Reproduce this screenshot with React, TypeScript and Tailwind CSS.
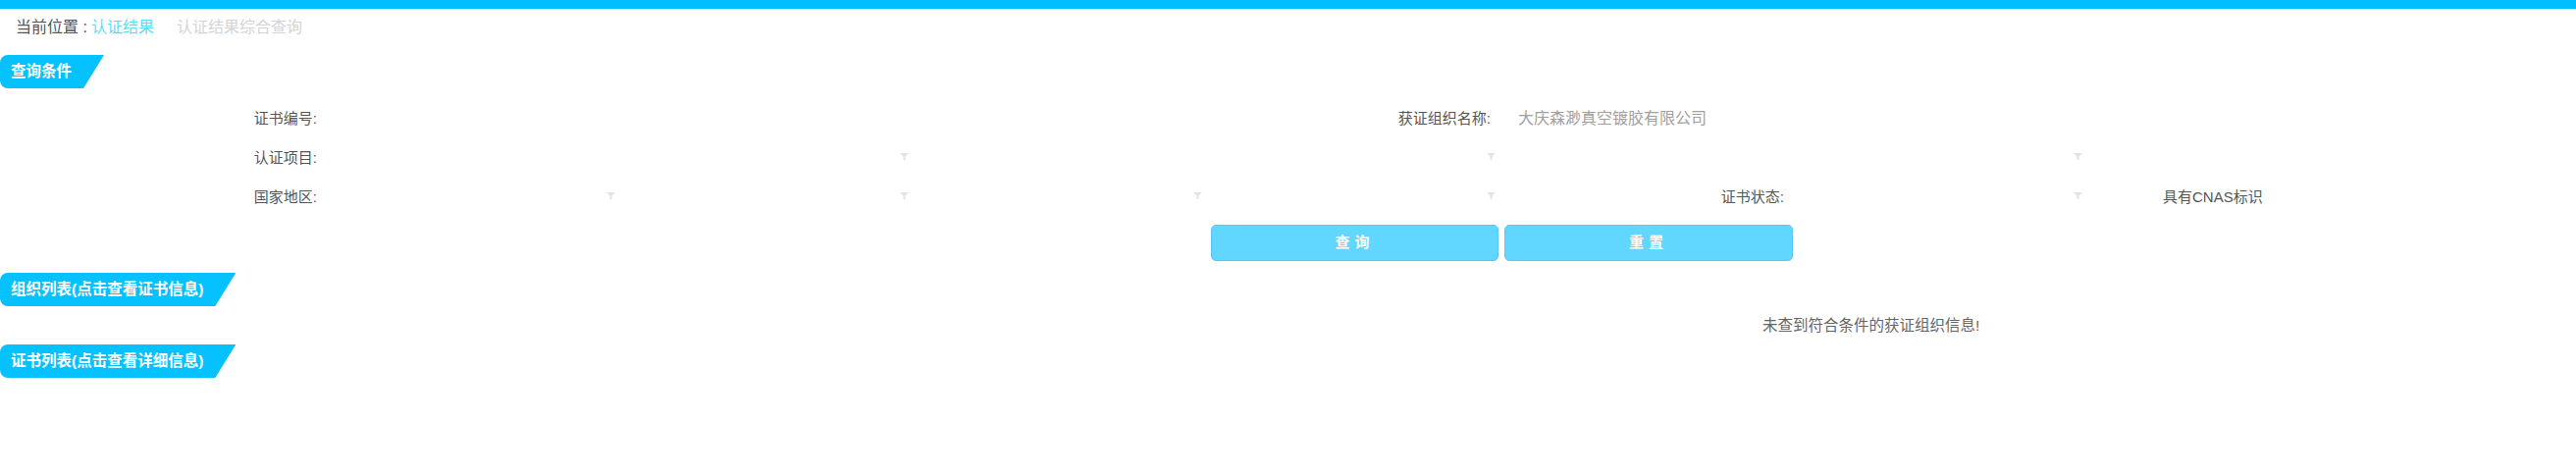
import React from "react";

const font = "font-['Liberation_Sans','Noto_Sans_CJK_SC',sans-serif]";

function SectionTitle({ text }: { text: string }) {
  return (
    <div className="flex">
      <div className="flex h-[34px] items-center rounded-l-[8px] bg-[#05c2ff] pl-[11px] pr-[33px] text-[15.5px] font-bold text-white [clip-path:polygon(0_0,100%_0,calc(100%-21px)_100%,0_100%)]">
        {text}
      </div>
    </div>
  );
}

function Arrow() {
  return (
    <svg width="9" height="7" viewBox="0 0 9 7" className="mb-[6px] mr-[-5px] shrink-0">
      <polygon points="0,0 9,0 5.5,3.5 5.5,7 3.5,7 3.5,3.5" fill="#e3e3e3" />
    </svg>
  );
}

function Select({ span = "col-span-1" }: { span?: string }) {
  return (
    <div className={`${span} flex items-center justify-end`}>
      <Arrow />
    </div>
  );
}

function Label({ text, span = "col-span-1" }: { text: string; span?: string }) {
  return <div className={`${span} flex items-center justify-end pb-[2px] text-[#555]`}>{text}</div>;
}

export default function App() {
  return (
    <div className={`min-h-[482px] w-full bg-white text-[15px] ${font}`}>
      <div className="h-[9px] bg-[#00bfff]" />

      <div className="flex h-[38px] items-center pl-[16px] text-[16px]">
        <span className="text-[#555]">当前位置 :</span>
        <span className="ml-[4px] text-[#5fdcf6]">认证结果</span>
        <span className="ml-[23px] text-[#d4d4d4]">认证结果综合查询</span>
      </div>

      <div className="mt-[9px]">
        <SectionTitle text="查询条件" />
      </div>

      <div className="mt-[12px] grid grid-cols-[323px_repeat(6,299px)_1fr] auto-rows-[40px]">
        {/* row 1 */}
        <Label text="证书编号:" />
        <div className="col-span-3" />
        <Label text="获证组织名称:" />
        <div className="col-span-3 flex items-center pb-[2px] pl-[28px] text-[16px] text-[#a0a0a0]">
          大庆森渺真空镀胶有限公司
        </div>

        {/* row 2 */}
        <Label text="认证项目:" />
        <Select span="col-span-2" />
        <Select span="col-span-2" />
        <Select span="col-span-2" />
        <div />

        {/* row 3 */}
        <Label text="国家地区:" />
        <Select />
        <Select />
        <Select />
        <Select />
        <Label text="证书状态:" />
        <Select />
        <div className="flex items-center pb-[2px] pl-[87px] text-[#555]">具有CNAS标识</div>
      </div>

      <div className="ml-[1234px] mt-[7px] flex gap-[6px]">
        <button
          type="button"
          className="h-[37px] w-[293px] rounded-[5px] border border-[#5cc4fb] bg-[#61d6fe] text-[15px] font-bold tracking-[5px] text-white"
        >
          查询
        </button>
        <button
          type="button"
          className="h-[37px] w-[294px] rounded-[5px] border border-[#5cc4fb] bg-[#61d6fe] text-[15px] font-bold tracking-[5px] text-white"
        >
          重置
        </button>
      </div>

      <div className="mt-[12px]">
        <SectionTitle text="组织列表(点击查看证书信息)" />
      </div>

      <div className="flex h-[39px] items-center pl-[1796px] text-[15.5px] text-[#666]">
        未查到符合条件的获证组织信息!
      </div>

      <SectionTitle text="证书列表(点击查看详细信息)" />
    </div>
  );
}
